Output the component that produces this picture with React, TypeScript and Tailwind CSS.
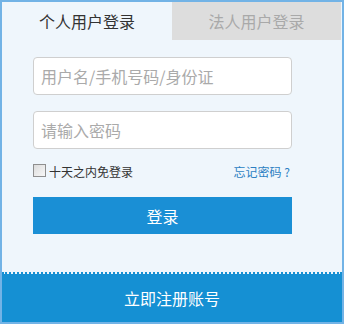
export default function App() {
  const font = { fontFamily: '"Microsoft YaHei", "Noto Sans CJK SC", sans-serif' };
  return (
    <div className="w-[344px] h-[324px] border-2 border-[#72b3e6] bg-[#eff6fc] flex flex-col" style={font}>
      <div className="flex h-[38px]">
        <div className="w-[170px] flex items-center justify-center text-[16px] text-[#333]">个人用户登录</div>
        <div className="flex-1 mr-px bg-[#dddddd] flex items-center justify-center text-[16px] text-[#a9a9a9]">法人用户登录</div>
      </div>
      <div className="pl-[31px] pt-[17px] flex flex-col flex-1">
        <input
          className="w-[259px] h-[38px] border border-[#cfcfcf] rounded-sm bg-white px-[7px] text-[16px] outline-none placeholder:text-[#aaaaaa]"
          placeholder="用户名/手机号码/身份证"
        />
        <input
          type="password"
          className="mt-[16px] w-[259px] h-[38px] border border-[#cfcfcf] rounded-sm bg-white px-[7px] text-[16px] outline-none placeholder:text-[#aaaaaa]"
          placeholder="请输入密码"
        />
        <div className="w-[259px] mt-[15px] h-[15px] flex items-center justify-between text-[12px]">
          <label className="flex items-center gap-[3px] text-[#333]">
            <span className="w-[13px] h-[13px] mb-[3px] border border-[#8f8f8f] bg-gradient-to-br from-[#dcdcdc] to-[#f8f8f8]" />
            十天之内免登录
          </label>
          <span className="text-[#2c7fc2] pr-[2px]">忘记密码 ?</span>
        </div>
        <button className="mt-[18px] w-[259px] h-[37px] bg-[#1a8fd5] text-white text-[16px]">登录</button>
      </div>
      <div className="border-t-2 border-dotted border-[#1590d3]" />
      <div className="h-[48px] bg-[#1590d3] flex items-center justify-center text-white text-[16px]">立即注册账号</div>
    </div>
  );
}
